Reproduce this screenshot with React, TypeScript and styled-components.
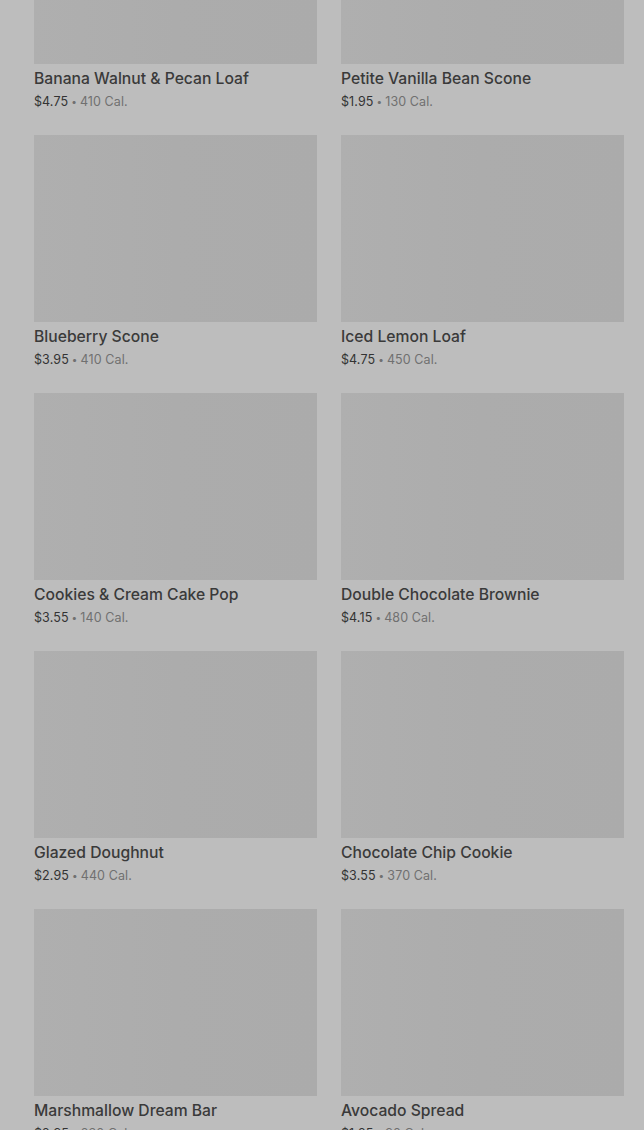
import React from "react";
import styled, { createGlobalStyle } from "styled-components";

const Global = createGlobalStyle`
  html, body { margin: 0; padding: 0; background: #bdbdbd; }
  body { font-family: Inter, "Noto Sans", sans-serif; overflow: hidden; }
`;

const Page = styled.div`
  width: 644px;
  height: 1130px;
  overflow: hidden;
  background: #bdbdbd;
`;

const Grid = styled.div`
  display: grid;
  grid-template-columns: 283px 283px;
  column-gap: 24px;
  row-gap: 23px;
  padding: 0 20px 0 34px;
  margin-top: -123px;
`;

const Card = styled.div`
  display: flex;
  flex-direction: column;
`;

const Thumb = styled.div`
  height: 187px;
  background: linear-gradient(90deg, #afafaf 0%, #acacac 50%, #ababab 100%);
`;

const Title = styled.div`
  margin-top: 3px;
  height: 24px;
  font-size: 15.7px;
  line-height: 24px;
  font-weight: 500;
  color: #3a3a3a;
  white-space: nowrap;
`;

const Meta = styled.div`
  margin-top: 1px;
  height: 20px;
  font-size: 12.5px;
  line-height: 20px;
  color: #707070;
  letter-spacing: 0.1px;
  white-space: nowrap;
`;

const Price = styled.span`
  color: #333333;
`;

const Dot = styled.span`
  font-size: 10px;
  line-height: 0;
  margin: 0 3px;
  vertical-align: 1px;
`;

const items = [
  ["Banana Walnut & Pecan Loaf", "$4.75", "410 Cal."],
  ["Petite Vanilla Bean Scone", "$1.95", "130 Cal."],
  ["Blueberry Scone", "$3.95", "410 Cal."],
  ["Iced Lemon Loaf", "$4.75", "450 Cal."],
  ["Cookies & Cream Cake Pop", "$3.55", "140 Cal."],
  ["Double Chocolate Brownie", "$4.15", "480 Cal."],
  ["Glazed Doughnut", "$2.95", "440 Cal."],
  ["Chocolate Chip Cookie", "$3.55", "370 Cal."],
  ["Marshmallow Dream Bar", "$2.95", "230 Cal."],
  ["Avocado Spread", "$1.25", "90 Cal."],
];

export default function App() {
  return (
    <Page>
      <Global />
      <Grid>
        {items.map(([name, price, cal]) => (
          <Card key={name}>
            <Thumb />
            <Title>{name}</Title>
            <Meta>
              <Price>{price}</Price>
              <Dot>•</Dot>
              {cal}
            </Meta>
          </Card>
        ))}
      </Grid>
    </Page>
  );
}
